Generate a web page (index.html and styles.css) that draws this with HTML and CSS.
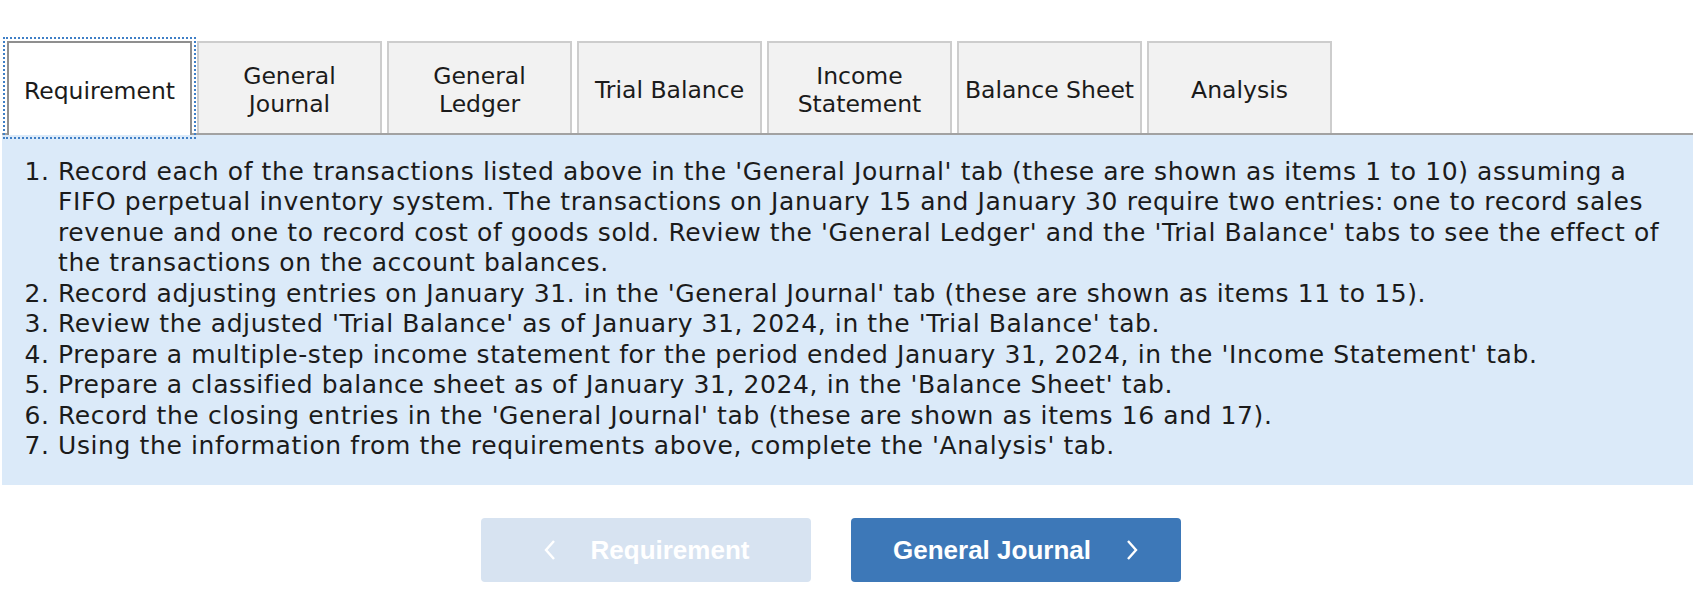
FILE: index.html
```html
<!DOCTYPE html>
<html lang="en">
<head>
	<meta charset="utf-8"/>
	<title>Requirements</title>
	<link rel="stylesheet" href="styles.css">
</head>
<body>

<div id="wrap">
	<div class="tabs">
		<div class="tab active">Requirement</div>
		<div class="tab">General<br/>Journal</div>
		<div class="tab">General<br/>Ledger</div>
		<div class="tab">Trial Balance</div>
		<div class="tab">Income<br/>Statement</div>
		<div class="tab">Balance Sheet</div>
		<div class="tab">Analysis</div>
	</div>

	<div class="panel">
		<ol>
			<li>Record each of the transactions listed above in the 'General Journal' tab (these are shown as items 1 to 10) assuming a FIFO perpetual inventory system. The transactions on January 15 and January 30 require two entries: one to record sales revenue and one to record cost of goods sold. Review the 'General Ledger' and the 'Trial Balance' tabs to see the effect of the transactions on the account balances.</li>
			<li>Record adjusting entries on January 31. in the 'General Journal' tab (these are shown as items 11 to 15).</li>
			<li>Review the adjusted 'Trial Balance' as of January 31, 2024, in the 'Trial Balance' tab.</li>
			<li>Prepare a multiple-step income statement for the period ended January 31, 2024, in the 'Income Statement' tab.</li>
			<li>Prepare a classified balance sheet as of January 31, 2024, in the 'Balance Sheet' tab.</li>
			<li>Record the closing entries in the 'General Journal' tab (these are shown as items 16 and 17).</li>
			<li>Using the information from the requirements above, complete the 'Analysis' tab.</li>
		</ol>
	</div>

	<div class="nav">
		<div class="btn disabled">
			<svg class="chev" width="14" height="22" viewBox="0 0 14 22"><path d="M11 2 L3 11 L11 20" fill="none" stroke="#fff" stroke-width="2.4"/></svg>
			<span>Requirement</span>
		</div>
		<div class="btn">
			<span>General Journal</span>
			<svg class="chev" width="14" height="22" viewBox="0 0 14 22"><path d="M3 2 L11 11 L3 20" fill="none" stroke="#fff" stroke-width="2.4"/></svg>
		</div>
	</div>
</div>

</body>
</html>
```

FILE: styles.css
```css
body {
	background: #fff;
	color: #1b1b1b;
	font-family: "DejaVu Sans", Verdana, sans-serif;
	margin: 0;
	padding: 0;
}

#wrap {
	width: 1691px;
	margin: 0 0 0 2px;
	padding-top: 41px;
}

.tabs {
	display: flex;
	gap: 5px;
	padding-left: 5px;
	border-bottom: 2px solid #a2a2a2;
}

.tab {
	width: 185px;
	height: 92px;
	box-sizing: border-box;
	border: 2px solid #cdcdcd;
	border-bottom: none;
	background: #f2f2f2;
	font-size: 23.5px;
	line-height: 28px;
	text-align: center;
	display: flex;
	align-items: center;
	justify-content: center;
	padding-top: 3px;
}

.tab.active {
	background: #fff;
	border-color: #8f8f8f;
	height: 94px;
	margin-bottom: -2px;
	outline: 2px dotted #3f7fc6;
	outline-offset: 2px;
	position: relative;
}

.panel {
	background: #dbeaf9;
	padding: 21.5px 30px 23.5px 0;
}

ol {
	margin: 0;
	padding-left: 56px;
	font-size: 25px;
	line-height: 30.5px;
	letter-spacing: 0.6px;
}

.nav {
	display: flex;
	justify-content: center;
	gap: 40px;
	padding: 33px 33px 0 0;
}

.btn {
	width: 330px;
	height: 64px;
	border-radius: 4px;
	background: #3d78b8;
	color: #fff;
	font: bold 26px "Liberation Sans", Arial, sans-serif;
	display: flex;
	align-items: center;
	justify-content: center;
	gap: 34px;
}

.btn.disabled {
	background: #d7e3f1;
}

.chev {
	display: block;
}
```
